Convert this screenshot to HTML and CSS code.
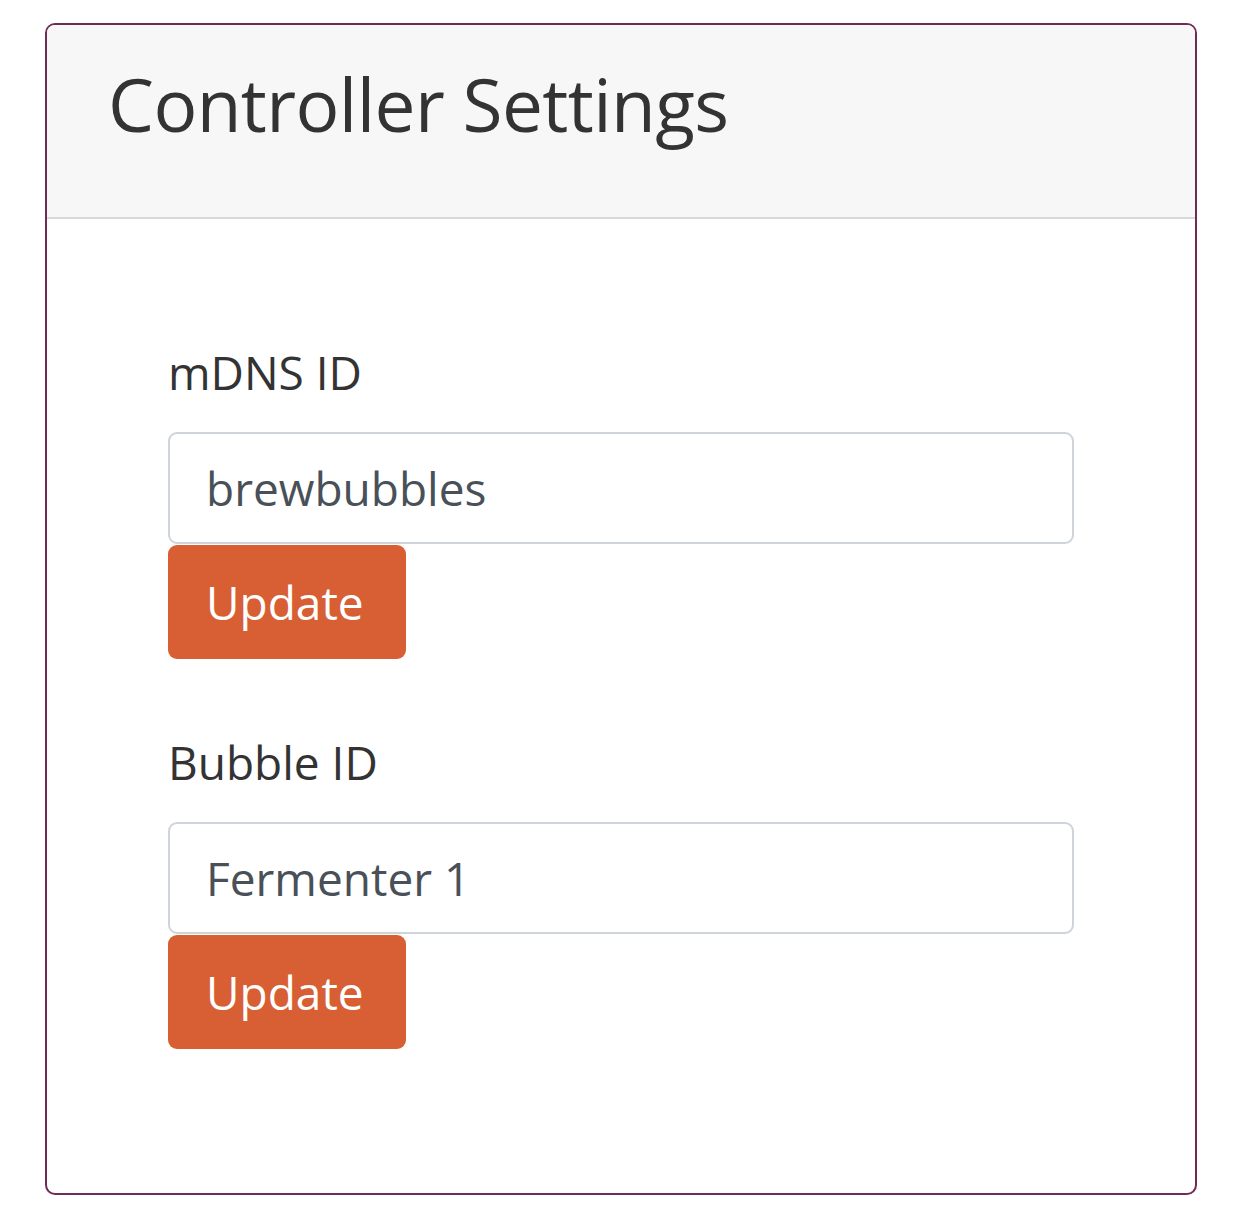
FILE: index.html
```html
<!DOCTYPE html>
<html lang="en">
<head>
<meta charset="utf-8">
<title>Controller Settings</title>
<link rel="stylesheet" href="styles.css">
</head>
<body>
<div class="card">
  <div class="card-header">
    <h2 class="card-title">Controller Settings</h2>
  </div>
  <div class="card-body">
    <form class="setting">
      <label class="field-label" for="mdns">mDNS ID</label>
      <input class="field-input" id="mdns" type="text" value="brewbubbles">
      <button class="btn-update" type="button">Update</button>
    </form>
    <form class="setting">
      <label class="field-label" for="bubble">Bubble ID</label>
      <input class="field-input" id="bubble" type="text" value="Fermenter 1">
      <button class="btn-update" type="button">Update</button>
    </form>
  </div>
</div>
</body>
</html>
```

FILE: styles.css
```css
* {
  box-sizing: border-box;
}

html, body {
  margin: 0;
  padding: 0;
  background: #ffffff;
}

body {
  padding: 23px 0 0 45px;
  font-family: "Open Sans", "Noto Sans", sans-serif;
  color: #333333;
}

.card {
  width: 1152px;
  border: 2px solid #712a55;
  border-radius: 10px;
  overflow: hidden;
  background: #ffffff;
}

.card-header {
  background: #f7f7f7;
  border-bottom: 2px solid #d9d9d9;
  padding: 42px 40px 77px 61px;
}

.card-title {
  margin: 0;
  font-size: 73px;
  line-height: 73px;
  font-weight: 400;
  letter-spacing: -0.6px;
  color: #333333;
}

.card-body {
  padding: 119px 121px 144px 121px;
  display: flex;
  flex-direction: column;
  gap: 69px;
}

.setting {
  display: flex;
  flex-direction: column;
  align-items: flex-start;
  margin: 0;
}

.field-label {
  font-size: 46px;
  line-height: 69px;
  color: #333333;
  margin-bottom: 25px;
}

.field-input {
  width: 100%;
  height: 112px;
  border: 2px solid #ced4da;
  border-radius: 9px;
  padding: 0 36px;
  font-family: "Open Sans", "Noto Sans", sans-serif;
  font-size: 46px;
  line-height: 69px;
  color: #495057;
  background: #ffffff;
  outline: none;
}

.btn-update {
  margin-top: 1px;
  height: 114px;
  padding: 0 38px;
  width: 238px;
  border: none;
  border-radius: 9px;
  background: #d85f33;
  color: #ffffff;
  font-family: "Open Sans", "Noto Sans", sans-serif;
  font-size: 46px;
  line-height: 69px;
  text-align: left;
  cursor: pointer;
}
```
